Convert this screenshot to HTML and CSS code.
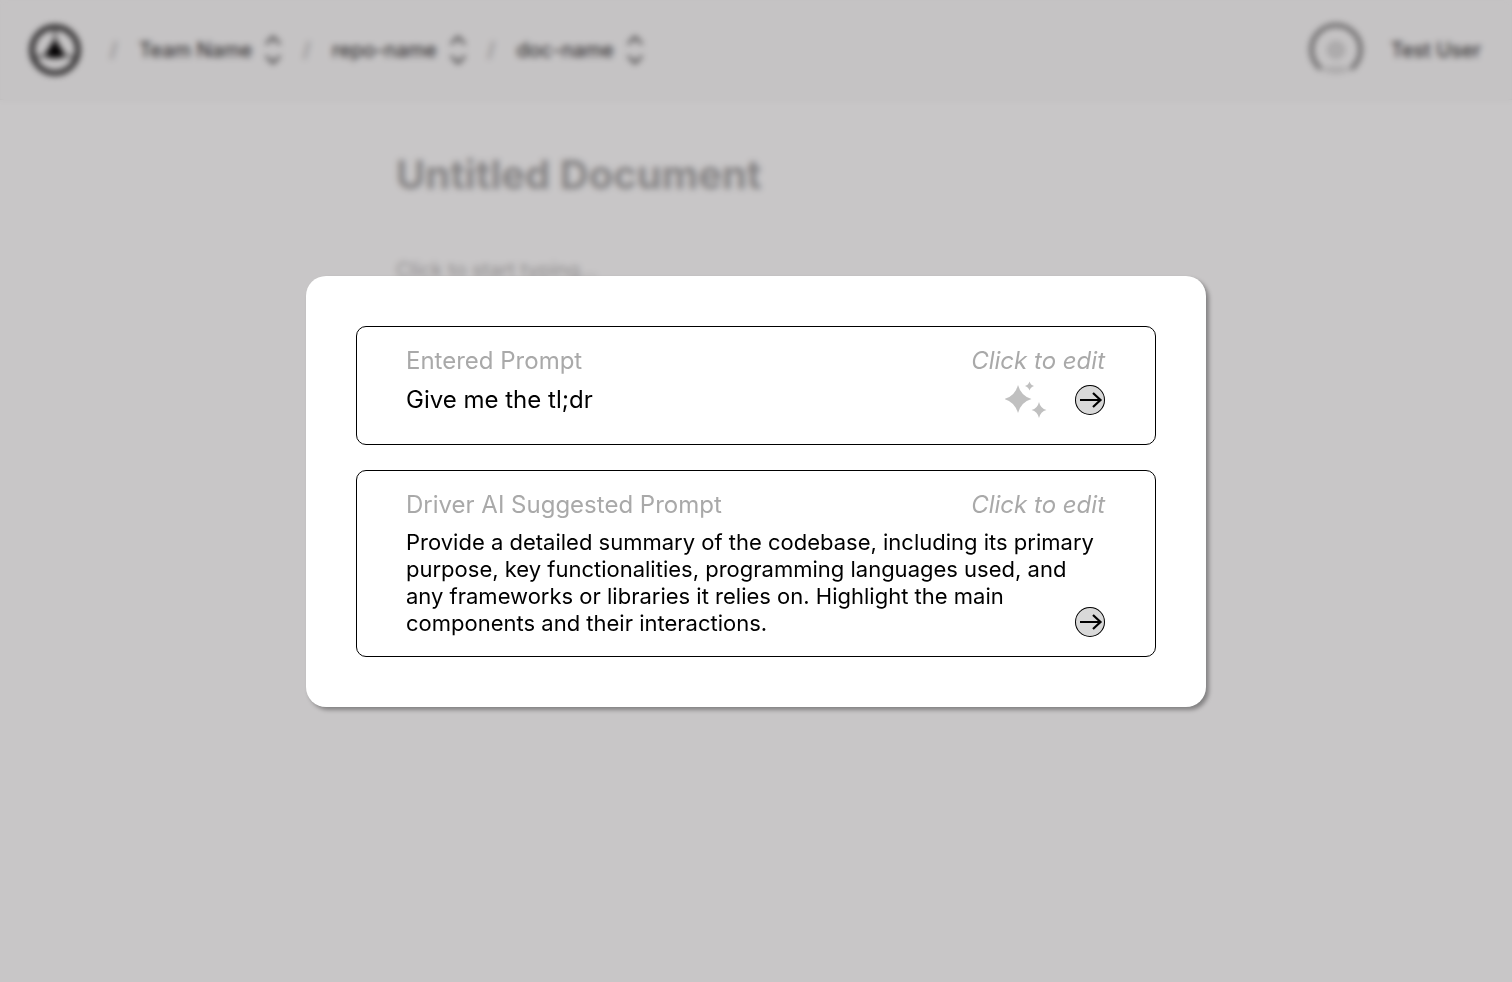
FILE: index.html
```html
<!DOCTYPE html>
<html lang="en">
<head>
<meta charset="utf-8">
<title>Untitled Document</title>
<link rel="stylesheet" href="styles.css">
</head>
<body>
<div class="page">
  <header class="topbar">
    <a class="logo" href="#" aria-label="Home">
      <svg width="54" height="54" viewBox="0 0 54 54"><circle cx="27" cy="27" r="23" fill="none" stroke="#222" stroke-width="5"/><path d="M27 5v14M8 34l11-2M46 34l-11-2" stroke="#333" stroke-width="2"/><path d="M27 14c2 7 7 10 10 19-6 3-14 3-20 0 3-9 8-12 10-19z"/></svg>
    </a>
    <nav class="crumbs" aria-label="Breadcrumb">
      <span class="slash">/</span>
      <button class="crumb" type="button">Team Name <svg width="18" height="30" viewBox="0 0 18 30"><path d="M2 9l7-7 7 7M2 21l7 7 7-7"/></svg></button>
      <span class="slash">/</span>
      <button class="crumb" type="button">repo-name <svg width="18" height="30" viewBox="0 0 18 30"><path d="M2 9l7-7 7 7M2 21l7 7 7-7"/></svg></button>
      <span class="slash">/</span>
      <button class="crumb" type="button">doc-name <svg width="18" height="30" viewBox="0 0 18 30"><path d="M2 9l7-7 7 7M2 21l7 7 7-7"/></svg></button>
    </nav>
    <button class="user" type="button">
      <svg width="54" height="54" viewBox="0 0 54 54" fill="none"><path d="M12 46a24.500 24.500 0 1 1 30 0" stroke="#777" stroke-width="4"/><circle cx="27" cy="27" r="8" fill="#ddd" stroke="#ccc" stroke-width="2"/><path d="M13 46q14-4 28 0-14 8-28 0z" fill="#ddd" stroke="#ccc"/></svg>
      Test User
    </button>
  </header>
  <main class="document">
    <h1 class="title">Untitled Document</h1>
    <p class="placeholder">Click to start typing...</p>
  </main>
</div>
<div class="overlay">
  <div class="modal" role="dialog" aria-modal="true" aria-label="Choose a prompt">
    <form class="prompt">
      <div class="prompt-head">
        <label for="entered">Entered Prompt</label>
        <button class="edit" type="button">Click to edit</button>
      </div>
      <div class="prompt-row">
        <input class="entered" id="entered" type="text" value="Give me the tl;dr">
        <svg class="sparkles" width="42" height="38" viewBox="0 0 42 38" fill="#c0c0c0"><path d="M13 4Q16 15 26.500 18Q16 21 13 32Q10 21 -.5 18Q10 15 13 4zM24.500 .5Q25.500 4 29 5Q25.500 6 24.500 9.500Q23.500 6 20 5Q23.500 4 24.500 .5zM34 21Q35.500 27.500 41.500 29Q35.500 30.500 34 37Q32.500 30.500 26.500 29Q32.500 27.500 34 21z"/></svg>
        <button class="send" type="submit" aria-label="Use entered prompt"><svg width="30" height="30" viewBox="0 0 30 30"><path d="M5 15h21M18 8l7.500 7-7.500 7"/></svg></button>
      </div>
    </form>
    <form class="prompt suggested-prompt">
      <div class="prompt-head">
        <label for="suggested">Driver AI Suggested Prompt</label>
        <button class="edit" type="button">Click to edit</button>
      </div>
      <div class="prompt-body">
        <textarea class="suggested" id="suggested" rows="4" spellcheck="false">Provide a detailed summary of the codebase, including its primary purpose, key functionalities, programming languages used, and any frameworks or libraries it relies on. Highlight the main components and their interactions.</textarea>
        <button class="send" type="submit" aria-label="Use suggested prompt"><svg width="30" height="30" viewBox="0 0 30 30"><path d="M5 15h21M18 8l7.500 7-7.500 7"/></svg></button>
      </div>
    </form>
  </div>
</div>
</body>
</html>
```
FILE: styles.css
```css
* {
  box-sizing: border-box;
}

body {
  margin: 0;
  background: #fff;
  color: #000;
  font-family: Inter, "Liberation Sans", sans-serif;
}

button,
input,
textarea {
  margin: 0;
  padding: 0;
  border: 0;
  background: none;
  color: inherit;
  font: inherit;
  outline: 0;
}

svg {
  display: block;
  flex: none;
}

.page {
  min-height: 100vh;
}

.topbar {
  display: flex;
  align-items: center;
  height: 100px;
  padding: 0 31px 0 28px;
  border-bottom: 1px solid #f0f0f0;
  background: #fbfbfb;
  font-size: 20px;
  font-weight: 400;
}

.crumbs {
  display: flex;
  align-items: center;
  gap: 21px;
  margin-left: 28px;
}

.slash {
  width: 8px;
  color: #999;
}

.crumb {
  display: flex;
  align-items: center;
  gap: 12px;
  color: #222;
}

.crumb svg {
  fill: none;
  stroke: #333;
  stroke-width: 2;
}

.user {
  display: flex;
  align-items: center;
  gap: 28px;
  margin-left: auto;
  color: #222;
}

.document {
  max-width: 720px;
  margin: 0 auto;
  padding-top: 50px;
}

.title {
  margin: 0;
  color: #aaa;
  font-size: 40px;
  font-weight: 700;
  line-height: 50px;
}

.placeholder {
  margin: 58px 0 0;
  color: #b4b4b4;
  font-size: 20px;
  line-height: 24px;
}

.overlay {
  position: fixed;
  inset: 0;
  display: flex;
  align-items: center;
  justify-content: center;
  padding: 24px;
  background: rgba(16, 7, 12, 0.23);
  backdrop-filter: blur(3px);
}

.modal {
  display: flex;
  flex-direction: column;
  gap: 25px;
  width: 100%;
  max-width: 900px;
  padding: 50px;
  border-radius: 20px;
  background: #fff;
  box-shadow: 3px 3px 4px rgba(0, 0, 0, 0.35);
}

.prompt {
  padding: 19px 50px 29px 49px;
  border: 1px solid #000;
  border-radius: 10px;
}

.suggested-prompt {
  padding-bottom: 19px;
}

.prompt-head {
  display: flex;
  justify-content: space-between;
  color: #a9a9a9;
  font-size: 24px;
  line-height: 30px;
}

.edit {
  font-style: italic;
}

.prompt-row {
  display: flex;
  align-items: center;
  height: 30px;
  margin-top: 9px;
}

.entered {
  flex: 1;
  min-width: 0;
  font-size: 24px;
  line-height: 30px;
}

.sparkles {
  margin-right: 28px;
}

.send {
  display: block;
  flex: none;
  width: 30px;
  height: 30px;
  border-radius: 50%;
  background: #d9d9d9;
  box-shadow: inset 0 0 0 1px #000;
}

.send path {
  fill: none;
  stroke: #000;
  stroke-width: 2.2;
}

.prompt-body {
  position: relative;
  margin-top: 9px;
}

.suggested {
  display: block;
  width: 100%;
  overflow: hidden;
  resize: none;
  font-size: 22px;
  line-height: 27px;
}

.prompt-body .send {
  position: absolute;
  right: 0;
  bottom: 0;
}
```
